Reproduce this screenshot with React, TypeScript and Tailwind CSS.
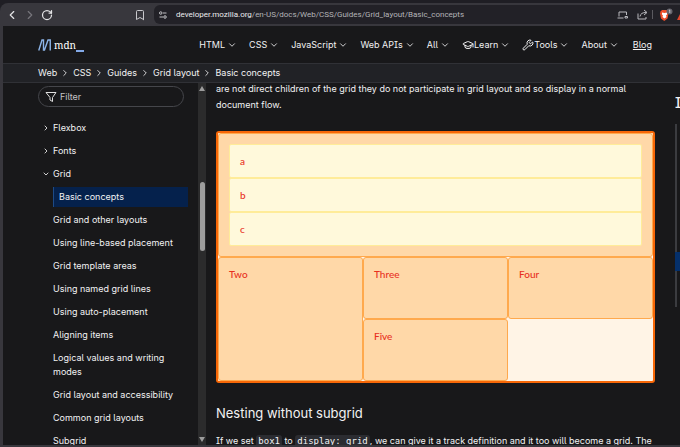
import { ChevronDown, ChevronLeft, ChevronRight, Bookmark, RotateCw, GraduationCap, Wrench } from "lucide-react";

const navItems = [
    { label: "HTML" },
    { label: "CSS" },
    { label: "JavaScript" },
    { label: "Web APIs" },
    { label: "All" },
    { label: "Learn", icon: GraduationCap },
    { label: "Tools", icon: Wrench },
    { label: "About" },
];

const crumbs = ["Web", "CSS", "Guides", "Grid layout", "Basic concepts"];

const gridPages = [
    "Grid and other layouts",
    "Using line-based placement",
    "Grid template areas",
    "Using named grid lines",
    "Using auto-placement",
    "Aligning items",
    "Logical values and writing modes",
    "Grid layout and accessibility",
    "Common grid layouts",
    "Subgrid",
];

const BrowserBar = () => (
    <div className="bg-[#1f1e24] pt-[3px]">
        <div className="flex h-[23px] items-center rounded-tl-lg bg-[#38373d] pl-[5px] text-[#e4e4e6]">
            <button aria-label="Back" className="w-[14px]"><ChevronLeft size={14} strokeWidth={2} /></button>
            <button aria-label="Forward" className="ml-1 w-[14px] text-[#77767c]"><ChevronRight size={14} strokeWidth={2} /></button>
            <button aria-label="Reload" className="ml-1"><RotateCw size={12} strokeWidth={2.5} /></button>
            <button aria-label="Bookmark" className="ml-[81px]"><Bookmark size={12} strokeWidth={2} className="text-[#c8c8cc]" /></button>
            <div className="ml-2 flex h-[19px] flex-1 items-center overflow-hidden rounded-l-md bg-[#222127] pl-[5px]">
                <svg width="8" height="8" viewBox="0 0 16 16" fill="none" stroke="#c2c2c6" strokeWidth="2" aria-hidden="true">
                    <circle cx="3.5" cy="4" r="2.5" />
                    <path d="M8 4h7M1 12h7" />
                    <circle cx="12" cy="12" r="2.5" />
                </svg>
                <p className="ml-[9px] flex-1 whitespace-nowrap font-[Roboto,sans-serif] text-[8px] text-[#b4b4b8]">
                    <span className="text-[#ececee]">developer.mozilla.org</span>/en-US/docs/Web/CSS/Guides/Grid_layout/Basic_concepts
                </p>
                <div className="flex items-center">
                    <svg width="11" height="10" viewBox="0 0 22 20" fill="none" stroke="#b9b9be" strokeWidth="2" aria-hidden="true">
                        <path d="M4 13V4h15v6M1 16h12" />
                        <path d="M16 13h5v3h-5z" />
                    </svg>
                    <svg className="ml-[9px]" width="11" height="11" viewBox="0 0 22 22" fill="none" stroke="#b9b9be" strokeWidth="2" aria-hidden="true">
                        <path d="M2 9v11h16v-4" />
                        <path d="M6 15c1-6 5-8 13-8M14 2l6 5-6 5" />
                    </svg>
                    <span className="ml-1 h-[9px] w-px bg-[#5b5a60]" />
                    <svg className="ml-1.5" width="14" height="14" viewBox="0 0 28 28" aria-hidden="true">
                        <path d="M3 7l3-3h9l3 3 1 4-2 10-6.500 5-6.500-5-2-10z" fill="#f0502a" />
                        <path d="M6 9l5 1 5-1 0 4-2 2 1 3-4 3-4-3 1-3-2-2z" fill="#fff" />
                        <circle cx="21" cy="7" r="6" fill="#66656d" />
                        <path d="M20 5l1.500-1v6" fill="none" stroke="#ddd" strokeWidth="1.500" />
                    </svg>
                    <svg className="ml-1 mt-1" width="3" height="6" viewBox="0 0 3 6" aria-hidden="true">
                        <path d="M3 0v6H0z" fill="#e0452c" />
                    </svg>
                </div>
            </div>
        </div>
    </div>
);

const Header = () => (
    <header className="flex h-[37px] items-center justify-between pl-[35px] pr-7">
        <a href="#" aria-label="mdn" className="flex items-center">
            <svg width="14" height="12" viewBox="0 0 28 24" fill="none" stroke="#8cb4e8" strokeWidth="2.8" aria-hidden="true">
                <path d="M1.500 23L8 2h3v20h2L20 2h4.500v21" />
            </svg>
            <span className="ml-0.5 font-['Noto_Serif','DejaVu_Serif',serif] text-[10px] leading-3 text-white">mdn</span>
            <span className="mt-3 h-0.5 w-2 bg-[#83a9e8]" />
        </a>
        <nav className="flex items-center gap-3">
            {navItems.map(({ label, icon: Icon }) => (
                <button key={label} className="flex items-center whitespace-nowrap">
                    {Icon && <Icon size={12} strokeWidth={2} />}
                    <span>{label}</span>
                    <ChevronDown size={10} strokeWidth={2} className="ml-0.5" />
                </button>
            ))}
            <a href="#" className="ml-0.5 underline">Blog</a>
        </nav>
    </header>
);

const Breadcrumbs = () => (
    <nav aria-label="Breadcrumb" className="flex h-[20px] items-center gap-[3px] border-y border-[#303136] bg-[#212226] pl-[35px]">
        {crumbs.map((crumb, i) => (
            <div key={crumb} className="flex items-center gap-[3px]">
                {i > 0 && <ChevronRight size={10} strokeWidth={2} />}
                <a href="#">{crumb}</a>
            </div>
        ))}
    </nav>
);

const Sidebar = () => (
    <aside className="flex w-[203px] shrink-0">
        <div className="flex-1 overflow-hidden pl-[35px] pt-[3px]">
            <label className="flex h-[21px] w-[146px] items-center gap-[3px] rounded-full border border-[#45464b] pl-1.5">
                <svg width="12" height="12" viewBox="0 0 24 24" fill="none" stroke="#e0e0e0" strokeWidth="2" strokeLinejoin="round" aria-hidden="true">
                    <path d="M2 3h20l-7 10v8l-5-3v-5z" />
                </svg>
                <input aria-label="Filter" placeholder="Filter" className="w-24 bg-transparent outline-none placeholder:text-[#c4c4c6]" />
            </label>
            <ul className="mt-3.5 leading-[14px]">
                {["Flexbox", "Fonts"].map((name) => (
                    <li key={name} className="mb-[9px]">
                        <button className="flex items-center gap-[3px] pl-1"><ChevronRight size={8} strokeWidth={2.5} />{name}</button>
                    </li>
                ))}
                <li>
                    <button className="flex items-center gap-[3px] pl-1"><ChevronDown size={8} strokeWidth={2.5} />Grid</button>
                    <ul className="ml-[15px]">
                        <li className="mb-1.5 mt-1.5 mr-2.5">
                            <a href="#" aria-current="page" className="block border-l border-[#1d4a86] bg-[#05214c] py-[3px] pl-[5px]">Basic concepts</a>
                        </li>
                        {gridPages.map((name) => (
                            <li key={name} className="mb-[9px] mr-3"><a href="#">{name}</a></li>
                        ))}
                    </ul>
                </li>
            </ul>
        </div>
        <div className="flex w-2 flex-col items-center bg-[#2b2b2c] py-[3px]">
            <svg width="6" height="5" viewBox="0 0 6 5" aria-hidden="true"><path d="M3 0l3 5H0z" fill="#9c9c9c" /></svg>
            <div className="mt-[91px] h-[69px] w-[5px] rounded-full bg-[#9c9c9c]" />
            <svg className="mt-auto" width="6" height="5" viewBox="0 0 6 5" aria-hidden="true"><path d="M3 5l3-5H0z" fill="#9c9c9c" /></svg>
        </div>
    </aside>
);

const GridExample = () => (
    <div className="grid grid-cols-3 grid-rows-[auto_62px_62px] rounded-[3px] border-2 border-[#f76707] bg-[#fff4e6] font-[Lato,sans-serif] text-[10px] font-medium leading-4 text-[#e8301e]">
        <div className="col-span-3 rounded-[3px] border border-[#ffa94d] bg-[#ffd8a8] p-2.5">
            {["a", "b", "c"].map((name) => (
                <div key={name} className="flex h-[34px] items-center rounded-[2px] border border-[#ffec99] bg-[#fff9db] pl-2.5">{name}</div>
            ))}
        </div>
        <div className="row-span-2 rounded-[3px] border border-[#ffa94d] bg-[#ffd8a8] px-2.5 py-2">Two</div>
        <div className="rounded-[3px] border border-[#ffa94d] bg-[#ffd8a8] px-2.5 py-2">Three</div>
        <div className="rounded-[3px] border border-[#ffa94d] bg-[#ffd8a8] px-2.5 py-2">Four</div>
        <div className="rounded-[3px] border border-[#ffa94d] bg-[#ffd8a8] px-2.5 py-2">Five</div>
    </div>
);

const Code = ({ children }: { children: string }) => (
    <code className="rounded-[3px] bg-[#2b2c31] px-0.5 py-px font-['DejaVu_Sans_Mono',monospace] text-[9px]">{children}</code>
);

const Article = () => (
    <main className="-mt-0.5 min-w-0 flex-1 pl-2.5">
        <p className="leading-4">
            are not direct children of the grid they do not participate in grid layout and so display in a normal document flow.
        </p>
        <div className="mt-[18px]">
            <GridExample />
        </div>
        <h3 className="mt-5 text-[13px] leading-5">Nesting without subgrid</h3>
        <p className="mt-2.5 whitespace-nowrap leading-4">
            If we set <Code>box1</Code> to <Code>display: grid</Code>, we can give it a track definition and it too will become a grid. The
        </p>
    </main>
);

const Toc = () => (
    <aside className="ml-5 w-[5px] shrink-0 overflow-hidden pt-3">
        <h2 className="text-[14px] font-medium leading-4">I</h2>
        <div className="mt-[13px] h-[183px] border-l-2 border-[#3b3c40] pt-32">
            <div className="-ml-0.5 h-[19px] bg-[#05306b]" />
        </div>
    </aside>
);

export default function App() {
    return (
        <div className="flex h-screen flex-col overflow-hidden bg-[#38373d] font-[Inter,sans-serif] text-[9px] leading-[14px] text-[#f2f2f3] [font-feature-settings:'cv05','cv08']">
            <BrowserBar />
            <div className="mb-0.5 ml-[3px] flex min-h-0 flex-1 flex-col bg-[#18181a]">
                <Header />
                <Breadcrumbs />
                <div className="flex min-h-0 flex-1 overflow-hidden">
                    <Sidebar />
                    <Article />
                    <Toc />
                </div>
            </div>
        </div>
    );
}
